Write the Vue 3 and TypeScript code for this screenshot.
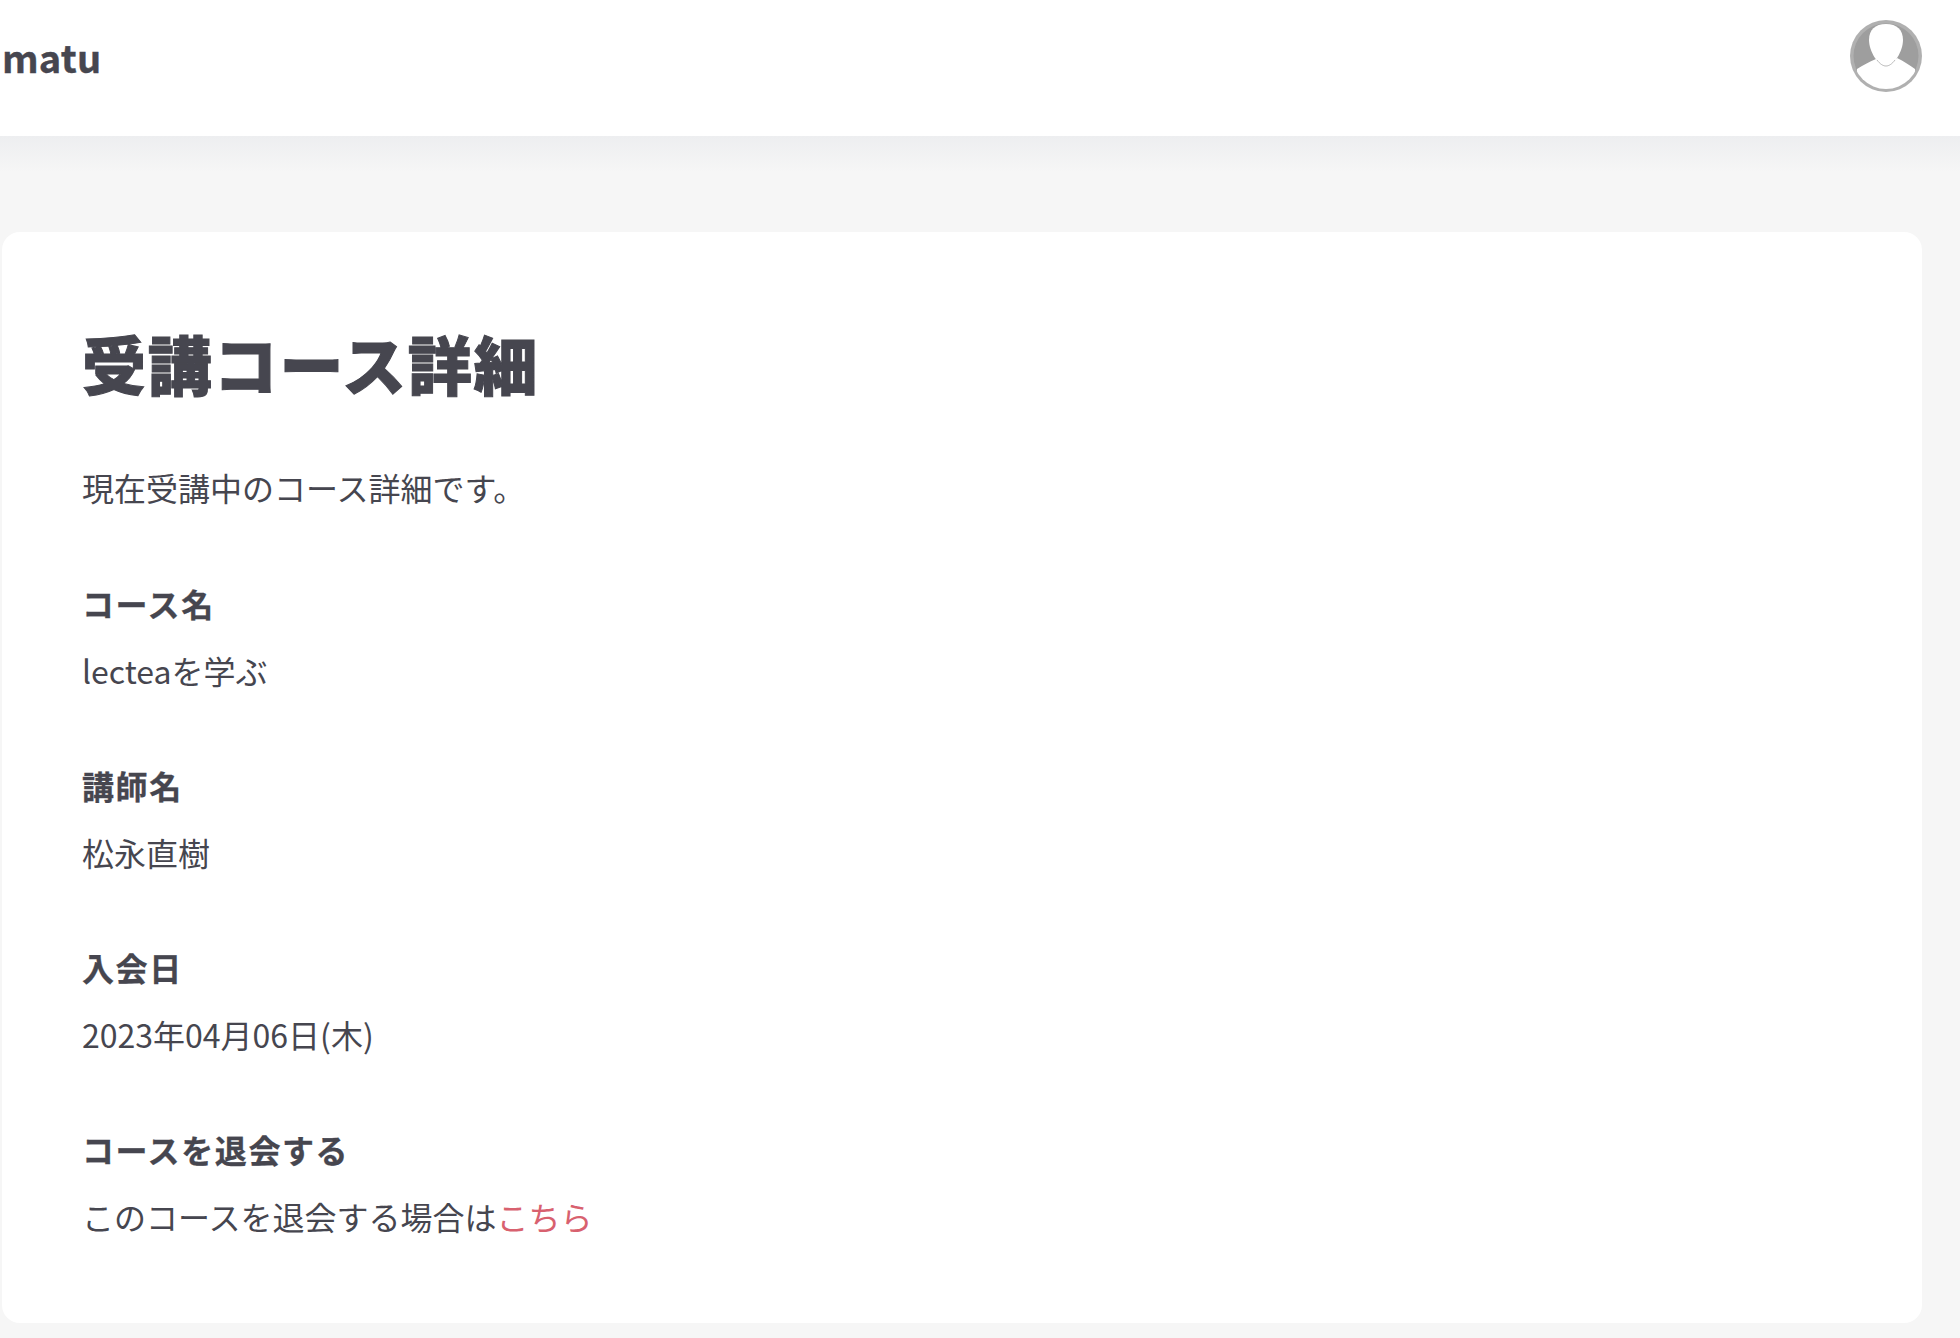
<script setup lang="ts">
interface Item { label: string; value: string; link?: string }
const items: Item[] = [
  { label: 'コース名', value: 'lecteaを学ぶ' },
  { label: '講師名', value: '松永直樹' },
  { label: '入会日', value: '2023年04月06日(木)' },
  { label: 'コースを退会する', value: 'このコースを退会する場合は', link: 'こちら' },
]
</script>

<template>
  <div class="page">
    <header class="header">
      <span class="name">matu</span>
      <svg class="avatar" viewBox="0 0 72 72" aria-hidden="true">
        <defs><clipPath id="c"><circle cx="36" cy="36" r="33" /></clipPath></defs>
        <circle cx="36" cy="36" r="36" fill="#b0b0b0" />
        <circle cx="36" cy="36" r="32.500" fill="#9e9e9e" />
        <g clip-path="url(#c)">
          <path d="M7 49 C13 45 19 42 26 39 C30 44 42 44 47 38 C54 41 59 45 65 49 L65 72 L7 72 Z" fill="#fff" />
          <path d="M36 4 C47 4 53 10 53 20 C53 31 44 46 36 46 C28 46 19 31 19 20 C19 10 25 4 36 4 Z" fill="#fff" />
          <path d="M27 40 C30 44 33 46 36 46 C39 46 42 44 45 40" fill="none" stroke="#9e9e9e" stroke-width="0.7" />
        </g>
      </svg>
    </header>
    <main class="main">
      <section class="card">
        <h1 class="title">受講コース詳細</h1>
        <p class="lead">現在受講中のコース詳細です。</p>
        <div v-for="item in items" :key="item.label" class="item">
          <h2 class="label">{{ item.label }}</h2>
          <p class="value">{{ item.value }}<a v-if="item.link" class="link">{{ item.link }}</a></p>
        </div>
      </section>
    </main>
  </div>
</template>

<style>
html, body { margin: 0; background: #f6f6f6; }
</style>

<style scoped>
.page {
  width: 1960px;
  height: 1338px;
  overflow: hidden;
  background: #f6f6f6;
  color: #46464f;
  font-family: "Noto Sans CJK JP", "Noto Sans", sans-serif;
}
.header {
  height: 136px;
  background: #fff;
  display: flex;
  align-items: center;
  justify-content: space-between;
  padding: 0 38px 24px 2px;
  box-sizing: border-box;
}
.name { margin-top: 2px; font-size: 38px; font-weight: 700; line-height: 1; letter-spacing: 0.2px; -webkit-text-stroke: 0.4px #46464f; }
.avatar { width: 72px; height: 72px; }
.main {
  padding: 96px 38px 0 2px;
  background: linear-gradient(#edeef0, #f6f6f6 36px) no-repeat;
}
.card {
  background: #fff;
  border-radius: 18px;
  height: 1091px;
  box-sizing: border-box;
  padding: 89px 80px 80px;
}
.title {
  margin: 0 0 59px;
  font-size: 64px;
  font-weight: 900;
  line-height: 1.3;
  letter-spacing: 1.8px;
  -webkit-text-stroke: 1px #46464f;
}
.lead, .value { margin: 0; font-size: 32px; font-weight: 400; line-height: 1.5; }
.item { margin-top: 67px; }
.item:first-of-type { margin-top: 68px; }
.label { margin: 0 0 19px; font-size: 32px; font-weight: 700; line-height: 1.5; letter-spacing: 1.6px; -webkit-text-stroke: 0.3px #46464f; }
.link { color: #d8616f; }
</style>
